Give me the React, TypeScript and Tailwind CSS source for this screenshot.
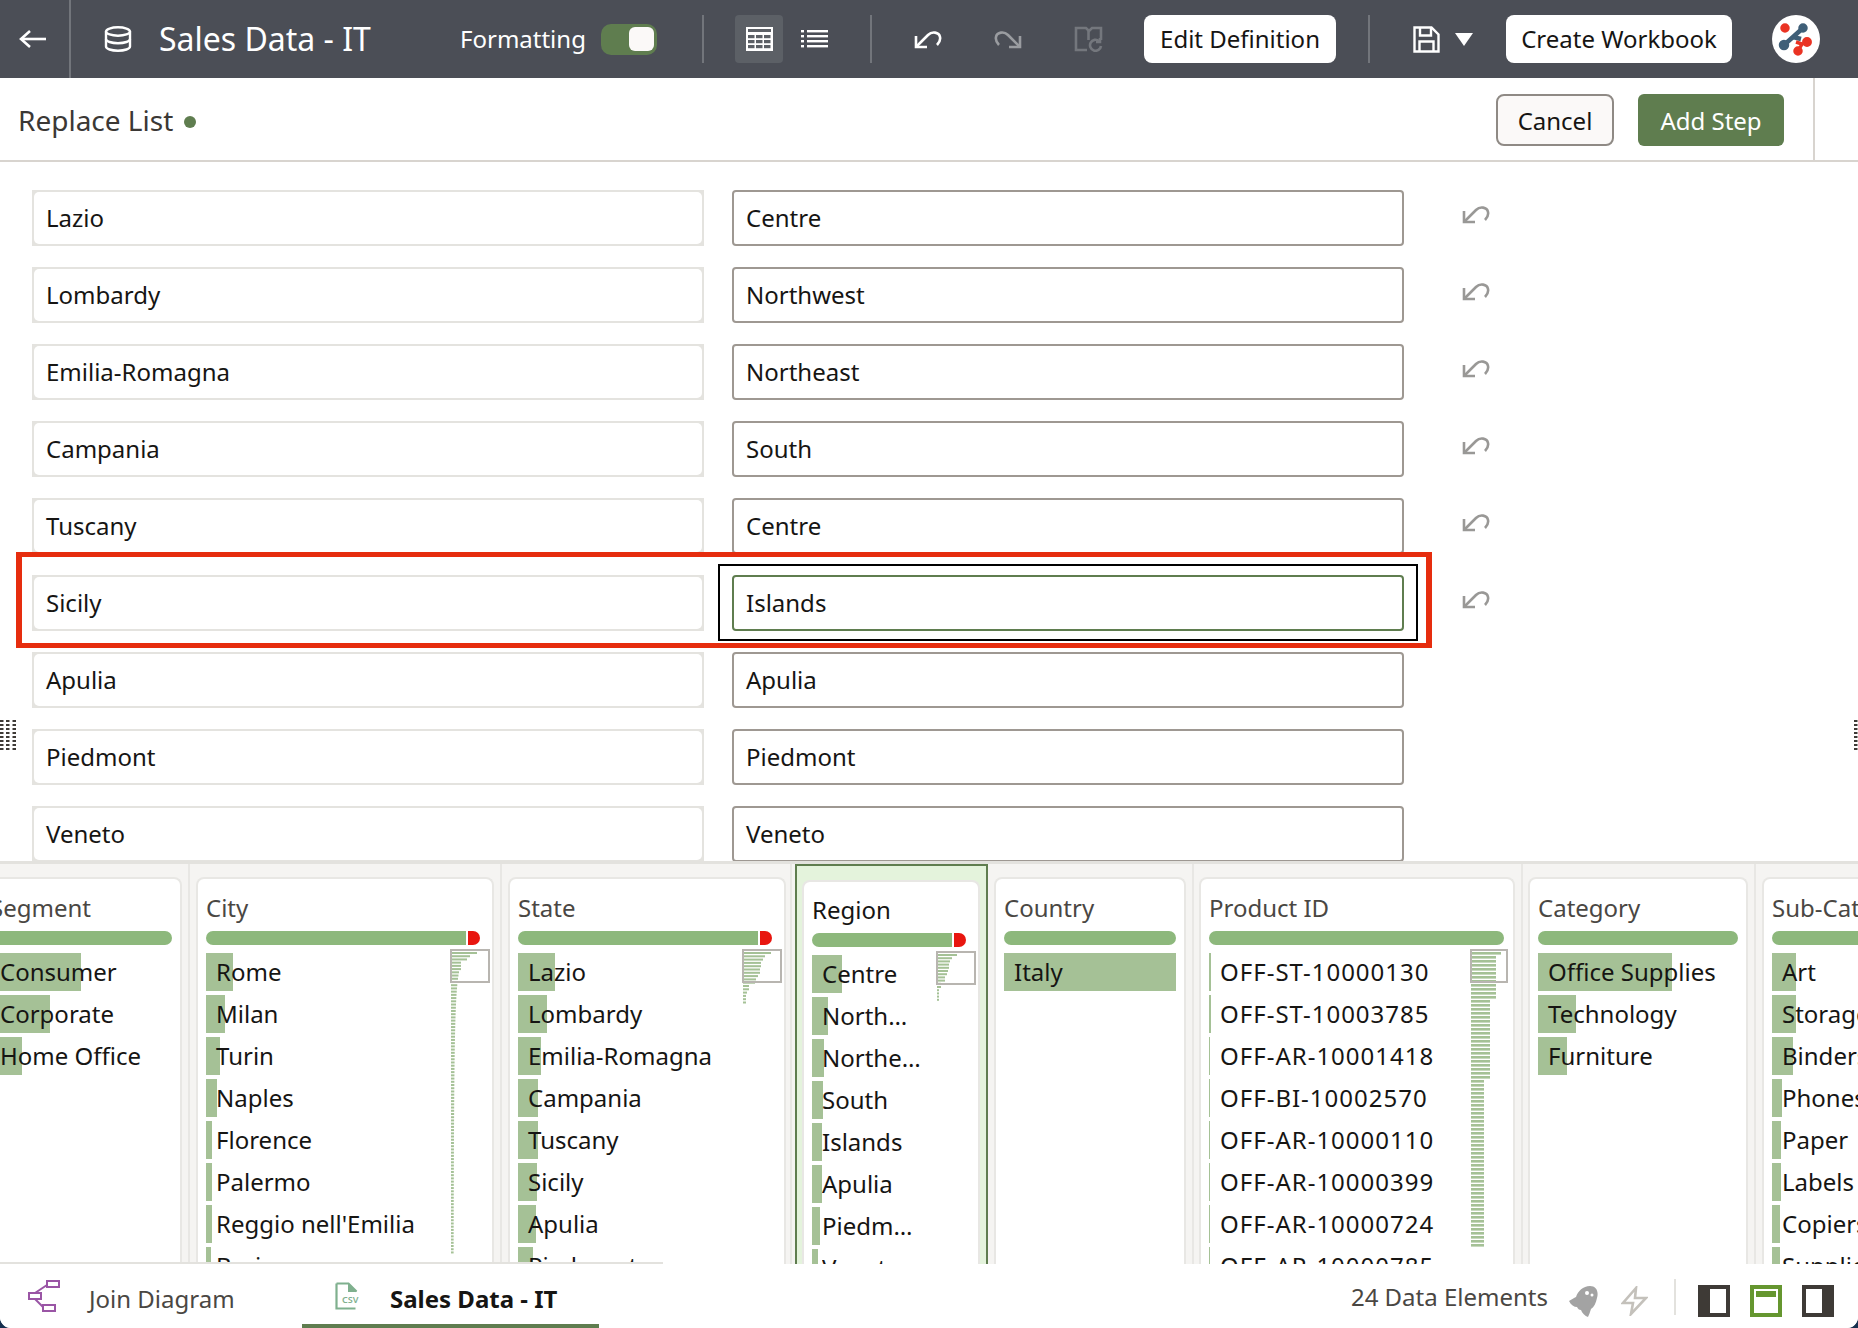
const listRows = [
  ['Lazio', 'Centre'],
  ['Lombardy', 'Northwest'],
  ['Emilia-Romagna', 'Northeast'],
  ['Campania', 'South'],
  ['Tuscany', 'Centre'],
  ['Sicily', 'Islands'],
  ['Apulia', 'Apulia'],
  ['Piedmont', 'Piedmont'],
  ['Veneto', 'Veneto'],
];

type Item = [string, number];
type Mini = { left: string; top: string; boxW: number; widths: number[]; step: number; barH: number };
type Column = {
  title: string;
  wrap: string;
  card: string;
  items: Item[];
  red?: boolean;
  active?: boolean;
  mini?: Mini;
  truncate?: boolean;
  spaced?: boolean;
};

const cityWidths = [26, 19, 16, 10, 10, 10, ...Array.from({ length: 88 }, (_, i) => 2 + 60 / (i + 10))];
const stateWidths = [28, 22, 20, 18, 18, 17, 17, 15, 13, 12, 6, 6, 4, 3, 3, 3];
const regionWidths = [20, 15, 13, 12, 12, 11, 10, 8, 8, 4, 4, 2, 2, 2, 2];
const productWidths = [30, 25, 25, 25, 25, 25, 25, 25, 25, 25, 25, 25,
  ...Array.from({ length: 20 }, () => 19), ...Array.from({ length: 42 }, () => 13)];

const columns: Column[] = [
  {
    title: 'Segment',
    wrap: 'border-r-2 border-[#e8e7e4] px-[6px]',
    card: 'w-[202px] pr-[8px]',
    items: [['Consumer', 91], ['Corporate', 60], ['Home Office', 32]],
  },
  {
    title: 'City',
    wrap: 'border-r-2 border-[#e8e7e4] px-[6px]',
    card: 'w-[298px] pr-[12px]',
    red: true,
    mini: { left: 'left-[252px]', top: 'top-[70px]', boxW: 38, widths: cityWidths, step: 3.22, barH: 2 },
    items: [['Rome', 27], ['Milan', 19], ['Turin', 14], ['Naples', 11], ['Florence', 6], ['Palermo', 6], ["Reggio nell'Emilia", 6], ['Bari', 5]],
  },
  {
    title: 'State',
    wrap: 'border-r-2 border-[#e8e7e4] pl-[6px] pr-[4px]',
    card: 'w-[278px] pr-[12px]',
    red: true,
    mini: { left: 'left-[232px]', top: 'top-[70px]', boxW: 38, widths: stateWidths, step: 3.3, barH: 2 },
    items: [['Lazio', 37], ['Lombardy', 29], ['Emilia-Romagna', 23], ['Campania', 20], ['Tuscany', 20], ['Sicily', 19], ['Apulia', 18], ['Piedmont', 15]],
  },
  {
    title: 'Region',
    wrap: 'ml-[3px] pl-[5px] pr-[6px] pt-[3px] border-x-2 border-t-2 border-[#5f7d4f] bg-[#e4f3dc]',
    card: 'w-[178px] pr-[12px]',
    red: true,
    active: true,
    truncate: true,
    mini: { left: 'left-[132px]', top: 'top-[69px]', boxW: 38, widths: regionWidths, step: 3.2, barH: 2 },
    items: [['Centre', 30], ['Northwest', 16], ['Northeast', 12], ['South', 11], ['Islands', 10], ['Apulia', 10], ['Piedmont', 8], ['Veneto', 6]],
  },
  {
    title: 'Country',
    wrap: 'border-r-2 border-[#e8e7e4] px-[6px]',
    card: 'w-[192px] pr-[8px]',
    items: [['Italy', 172]],
  },
  {
    title: 'Product ID',
    wrap: 'border-r-2 border-[#e8e7e4] pl-[5px] pr-[6px]',
    card: 'w-[316px] pr-[9px]',
    spaced: true,
    mini: { left: 'left-[269px]', top: 'top-[70px]', boxW: 36, widths: productWidths, step: 4, barH: 2.6 },
    items: [['OFF-ST-10000130', 2], ['OFF-ST-10003785', 2], ['OFF-AR-10001418', 1], ['OFF-BI-10002570', 1], ['OFF-AR-10000110', 1], ['OFF-AR-10000399', 1], ['OFF-AR-10000724', 1], ['OFF-AR-10000785', 1]],
  },
  {
    title: 'Category',
    wrap: 'border-r-2 border-[#e8e7e4] pl-[5px] pr-[6px]',
    card: 'w-[220px] pr-[8px]',
    items: [['Office Supplies', 134], ['Technology', 38], ['Furniture', 29]],
  },
  {
    title: 'Sub-Category',
    wrap: 'pl-[6px]',
    card: 'w-[240px] pr-[8px]',
    items: [['Art', 24], ['Storage', 24], ['Binders', 21], ['Phones', 10], ['Paper', 9], ['Labels', 9], ['Copiers', 8], ['Supplies', 8]],
  },
];

function UndoIcon({ className, flip = false }: { className?: string; flip?: boolean }) {
  return (
    <svg viewBox="0 0 28 20" className={className} fill="none" stroke="currentColor" strokeWidth="2.6">
      <g transform={flip ? 'translate(28 0) scale(-1 1)' : undefined}>
        <path d="M2 7v11h11" />
        <path d="M2 18 14 6c4-4 11-3 12 2 .6 3-1 6-3 8" />
      </g>
    </svg>
  );
}

function DatabaseIcon() {
  return (
    <svg viewBox="0 0 28 26" className="h-[26px] w-[28px] text-white" fill="none" stroke="currentColor" strokeWidth="2.4">
      <ellipse cx="14" cy="5.5" rx="12" ry="4.2" />
      <path d="M2 5.5v15c0 2.4 5.4 4.2 12 4.2s12-1.8 12-4.2v-15" />
      <path d="M2 13c0 2.4 5.4 4.2 12 4.2S26 15.4 26 13" />
    </svg>
  );
}

function TableIcon() {
  return (
    <svg viewBox="0 0 27 24" className="h-[24px] w-[27px]">
      <rect width="27" height="24" fill="#fff" />
      <rect x="2" y="2" width="23" height="3" fill="#5c6066" />
      {[8, 13, 18].map((y) =>
        [2, 10, 18].map((x) => <rect key={`${x}-${y}`} x={x} y={y} width="6.5" height="3.2" fill="#5c6066" />),
      )}
    </svg>
  );
}

function ListIcon() {
  return (
    <svg viewBox="0 0 27 20" className="h-[20px] w-[27px]" fill="#fff">
      {[1, 6, 11, 16].map((y) => (
        <g key={y}>
          <rect x="0" y={y} width="3" height="2.4" />
          <rect x="6" y={y} width="21" height="2.4" />
        </g>
      ))}
    </svg>
  );
}

function BookIcon() {
  return (
    <svg viewBox="0 0 29 26" className="h-[26px] w-[29px] text-[#74777d]" fill="none" stroke="currentColor" strokeWidth="2.6">
      <path d="M13 24H2V2h10l3 3 3-3h9v12" />
      <path d="M14.5 5v9" />
      <path d="M27 20a5.5 5.5 0 1 1-2-5" />
      <path d="M26 12v4h-4" />
    </svg>
  );
}

function SaveIcon() {
  return (
    <svg viewBox="0 0 27 27" className="h-[27px] w-[27px] text-white" fill="none" stroke="currentColor" strokeWidth="2.4">
      <path d="M1.5 1.5h17l7 7v17h-24z" />
      <path d="M7 1.5v8h11v-8" />
      <path d="M6.5 25.5v-10h14v10" />
    </svg>
  );
}

function Avatar() {
  return (
    <svg viewBox="0 0 48 48" className="h-[48px] w-[48px]">
      <circle cx="24" cy="24" r="24" fill="#fff" />
      <g stroke="#3f5f78" strokeWidth="4.5" fill="#3f5f78">
        <path d="M31 13 21 22 12 30" fill="none" />
        <path d="M21 22 29 24" fill="none" />
        <circle cx="31" cy="13" r="2.5" />
        <circle cx="12" cy="30" r="3" />
      </g>
      <g stroke="#ea3323" strokeWidth="3.5" fill="#ea3323">
        <path d="M24 27 30 29 26 36" fill="none" />
        <circle cx="13" cy="13" r="3" />
        <circle cx="35" cy="27" r="3.2" />
        <circle cx="26" cy="36" r="3" />
      </g>
    </svg>
  );
}

function JoinIcon() {
  return (
    <svg viewBox="0 0 32 32" className="h-[32px] w-[32px] text-[#9a55a5]" fill="none" stroke="currentColor" strokeWidth="2">
      <rect x="1" y="13" width="12" height="6" />
      <rect x="19" y="1" width="12" height="6" />
      <rect x="15" y="25" width="12" height="6" />
      <path d="M7 13 19 5" />
      <path d="M7 19 15 27" />
    </svg>
  );
}

function CsvIcon() {
  return (
    <svg viewBox="0 0 24 28" className="h-[28px] w-[24px] text-[#7fb08e]">
      <path d="M1.5 1.5h12l8 8M1.5 1.5v25h19" fill="none" stroke="currentColor" strokeWidth="2.2" />
      <path d="M13 1.5V10h9z" fill="currentColor" />
      <text x="7" y="21" fontSize="9" fontWeight="600" fill="currentColor" fontFamily="'Noto Sans', sans-serif">CSV</text>
    </svg>
  );
}

function RocketIcon() {
  return (
    <svg viewBox="0 0 30 32" className="h-[32px] w-[30px]">
      <path
        d="M22 1C28 1 31 6 29 13 28 18 26 22 23 24 22 27 21 30 20 32 17 31 14 28 13 25 11 25 10 24 9 22 6 22 3 20 1 16 4 14 6 13 8 12 10 6 15 1 22 1Z"
        fill="#a3a3a3"
      />
      <circle cx="19" cy="8" r="2" fill="#fff" />
      <circle cx="24" cy="10" r="1.5" fill="#fff" />
    </svg>
  );
}

function BoltIcon() {
  return (
    <svg viewBox="0 0 27 30" className="h-[30px] w-[27px]" fill="none" stroke="#c4c1bb" strokeWidth="2.6">
      <path d="M15 2 2 17h10l-2 11 15-16H14z" />
    </svg>
  );
}

function PanelIcon({ side }: { side: 'left' | 'top' | 'right' }) {
  if (side === 'top') {
    return (
      <svg viewBox="0 0 32 32" className="h-[32px] w-[32px]">
        <rect width="32" height="32" fill="#65962f" />
        <rect x="4" y="4" width="24" height="24" fill="#fff" />
        <rect x="6" y="6" width="20" height="6" fill="#65962f" />
      </svg>
    );
  }
  return (
    <svg viewBox="0 0 32 32" className="h-[32px] w-[32px]">
      <rect width="32" height="32" fill="#3e3a36" />
      <rect x={side === 'left' ? 12 : 4} y="4" width="16" height="24" fill="#fff" />
    </svg>
  );
}

function Handle({ className }: { className: string }) {
  return (
    <svg viewBox="0 0 16 30" className={`absolute h-[30px] w-[16px] ${className}`} fill="#3e3a36">
      {Array.from({ length: 8 }, (_, i) => (
        <g key={i}>
          <rect x="0" y={i * 4} width="3.5" height="2" />
          <rect x="6" y={i * 4} width="3.5" height="2" />
          <rect x="12.5" y={i * 4} width="3.5" height="2" />
        </g>
      ))}
    </svg>
  );
}

function Divider() {
  return <div className="h-[48px] w-[2px] bg-[#72757b]" />;
}

function Header() {
  return (
    <header className="flex h-[78px] shrink-0 items-center bg-[#4b4e56] text-white">
      <svg viewBox="0 0 27 20" className="ml-[19px] h-[20px] w-[27px]" fill="none" stroke="currentColor" strokeWidth="2.6">
        <path d="M27 10H2" />
        <path d="M11 2 2 10l9 8" />
      </svg>
      <div className="ml-[23px] h-full w-[2px] bg-[#72757b]" />
      <div className="ml-[33px]">
        <DatabaseIcon />
      </div>
      <div className="ml-[27px] w-[301px] text-[32px]">Sales Data - IT</div>
      <div className="w-[141px] text-[24px]">Formatting</div>
      <div className="flex h-[31px] w-[56px] items-center justify-end rounded-[10px] bg-[#5f7d4f] pr-[3px]">
        <div className="h-[24px] w-[25px] rounded-[6px] bg-[#fbf9f8]" />
      </div>
      <div className="ml-[45px]">
        <Divider />
      </div>
      <div className="ml-[31px] flex h-[48px] w-[48px] items-center justify-center rounded-[4px] bg-[#5c6066]">
        <TableIcon />
      </div>
      <div className="ml-[18px]">
        <ListIcon />
      </div>
      <div className="ml-[42px]">
        <Divider />
      </div>
      <UndoIcon className="ml-[42px] h-[20px] w-[28px] text-white" />
      <UndoIcon flip className="ml-[52px] h-[20px] w-[28px] text-[#9a9ca0]" />
      <div className="ml-[52px]">
        <BookIcon />
      </div>
      <button className="ml-[41px] h-[48px] w-[192px] rounded-[8px] bg-white text-[24px] text-[#161513]">Edit Definition</button>
      <div className="ml-[32px]">
        <Divider />
      </div>
      <div className="ml-[43px]">
        <SaveIcon />
      </div>
      <svg viewBox="0 0 18 13" className="ml-[15px] h-[13px] w-[18px]" fill="#fff">
        <path d="M0 0h18L9 13z" />
      </svg>
      <button className="ml-[33px] h-[48px] w-[226px] rounded-[8px] bg-white text-[24px] text-[#161513]">Create Workbook</button>
      <div className="ml-[40px]">
        <Avatar />
      </div>
    </header>
  );
}

function SubHeader() {
  return (
    <div className="flex h-[84px] shrink-0 items-center border-b-2 border-[#d8d4cf] bg-white">
      <div className="ml-[18px] mt-[2px] text-[28px] text-[#3b3835]">Replace List</div>
      <div className="ml-[11px] mt-[6px] h-[12px] w-[12px] rounded-full bg-[#5f7d4f]" />
      <div className="flex-1" />
      <button className="mt-[2px] h-[52px] w-[118px] rounded-[8px] border-2 border-[#8f8a85] bg-[#fbf9f8] pt-[2px] text-[24px] text-[#161513]">Cancel</button>
      <button className="ml-[24px] mt-[2px] h-[52px] w-[146px] rounded-[6px] bg-[#5f7d4f] pt-[2px] text-[24px] text-white">Add Step</button>
      <div className="ml-[29px] h-full w-[2px] bg-[#d8d4cf]" />
      <div className="w-[43px]" />
    </div>
  );
}

function ReplaceRow({ from, to, index }: { from: string; to: string; index: number }) {
  const selected = index === 5;
  return (
    <div className="relative mb-[21px] flex h-[56px] shrink-0">
      <div className="h-full w-[672px] bg-[#e4e3df] p-[2px]">
        <div className="flex h-full items-center rounded-[5px] bg-white pl-[12px] text-[24px] text-[#161513]">{from}</div>
      </div>
      <div
        className={`ml-[28px] flex h-full w-[672px] items-center rounded-[4px] border-2 bg-white pl-[12px] text-[24px] text-[#161513] ${
          selected ? 'border-[#5f7d4f]' : 'border-[#9e9892]'
        }`}
      >
        {to}
      </div>
      {index < 6 && <UndoIcon className="ml-[58px] mt-[14px] h-[20px] w-[28px] text-[#999896]" />}
      {selected && (
        <>
          <div className="absolute left-[-16px] top-[-23px] h-[96px] w-[1416px] border-x-[6px] border-y-[5px] border-[#e62d0e]" />
          <div className="absolute left-[686px] top-[-11px] h-[77px] w-[700px] border-2 border-black" />
        </>
      )}
    </div>
  );
}

function ReplaceForm() {
  return (
    <div className="relative h-[702px] shrink-0 overflow-hidden border-b-[3px] border-[#e3e2de] bg-white pl-[32px] pt-[28px]">
      {listRows.map(([from, to], i) => (
        <ReplaceRow key={from} from={from} to={to} index={i} />
      ))}
      <Handle className="left-0 top-[558px]" />
      <Handle className="right-[-12px] top-[558px]" />
    </div>
  );
}

function MiniMap({ mini }: { mini: Mini }) {
  const height = mini.widths.length * mini.step + 4;
  return (
    <svg
      className={`absolute ${mini.left} ${mini.top} z-20`}
      width={mini.boxW + 2}
      height={height}
      viewBox={`0 0 ${mini.boxW + 2} ${height}`}
    >
      {mini.widths.map((w, i) => (
        <rect key={i} x="1" y={3 + i * mini.step} width={w} height={mini.barH} fill="#a5c196" />
      ))}
      <rect x="1" y="1" width={mini.boxW} height="32" fill="none" stroke="#b8b5b0" strokeWidth="2" />
    </svg>
  );
}

function ProfileCard({ col }: { col: Column }) {
  return (
    <div className={`shrink-0 ${col.wrap}`}>
      <div
        className={`relative h-[420px] rounded-t-[8px] border-x-2 border-t-2 border-[#e8e7e4] bg-white pl-[8px] ${col.card} ${
          col.active ? 'mt-[11px] pt-[12px]' : 'mt-[13px] pt-[13px]'
        }`}
      >
        <div className={`h-[32px] whitespace-nowrap text-[24px] leading-[32px] ${col.active ? 'text-[#161513]' : 'text-[#4a4743]'}`}>
          {col.title}
        </div>
        <div className="mt-[7px] flex h-[14px] gap-[2px]">
          <div className={`flex-1 bg-[#8db87c] ${col.red ? 'rounded-l-full' : 'rounded-full'}`} />
          {col.red && <div className="w-[12px] rounded-r-full bg-[#e8160f]" />}
        </div>
        <div className="mt-[8px] flex flex-col gap-[4px]">
          {col.items.map(([name, width]) => (
            <div
              key={name}
              className={`relative flex h-[38px] items-center text-[24px] text-[#161513] ${col.spaced ? 'pl-[11px] tracking-[1px]' : 'pl-[10px]'}`}
            >
              <div className="absolute inset-y-0 left-0 bg-[#a5c196]" style={{ width }} />
              <span className={`relative whitespace-nowrap ${col.truncate ? 'w-[100px] truncate' : ''}`}>{name}</span>
            </div>
          ))}
        </div>
        {col.mini && <MiniMap mini={col.mini} />}
      </div>
    </div>
  );
}

function ProfileStrip() {
  return (
    <div className="h-[400px] shrink-0 overflow-hidden bg-[#f5f4f2]">
      <div className="ml-[-26px] flex h-full">
        {columns.map((col) => (
          <ProfileCard key={col.title} col={col} />
        ))}
      </div>
    </div>
  );
}

function Footer() {
  return (
    <footer className="relative flex h-[64px] shrink-0 items-center bg-white text-[24px]">
      <div className="absolute left-0 top-[-2px] h-[2px] w-[663px] bg-[#e3e2de]" />
      <div className="flex w-[302px] items-center pl-[28px] text-[#4a4743]">
        <JoinIcon />
        <span className="ml-[29px] mt-[6px]">Join Diagram</span>
      </div>
      <div className="flex h-full w-[297px] items-center border-b-4 border-[#5f7d4f] pl-[33px] font-bold text-[#161513]">
        <div className="mt-[4px]">
          <CsvIcon />
        </div>
        <span className="ml-[31px] mt-[10px]">Sales Data - IT</span>
      </div>
      <div className="flex-1" />
      <span className="mt-[2px] text-[#4a4743]">24 Data Elements</span>
      <div className="ml-[20px] mt-[10px]">
        <RocketIcon />
      </div>
      <div className="ml-[23px] mt-[10px]">
        <BoltIcon />
      </div>
      <div className="ml-[26px] mt-[2px] h-[36px] w-[2px] bg-[#e3e2de]" />
      <div className="ml-[22px] mt-[10px] flex gap-[20px]">
        <PanelIcon side="left" />
        <PanelIcon side="top" />
        <PanelIcon side="right" />
      </div>
      <div className="w-[24px]" />
    </footer>
  );
}

export default function App() {
  return (
    <div className="h-[1328px] w-[1858px] overflow-hidden bg-[#16304f]">
      <div className="flex h-full flex-col overflow-hidden rounded-b-[11px] bg-white font-['Noto_Sans',sans-serif]">
        <Header />
        <SubHeader />
        <ReplaceForm />
        <ProfileStrip />
        <Footer />
      </div>
    </div>
  );
}
